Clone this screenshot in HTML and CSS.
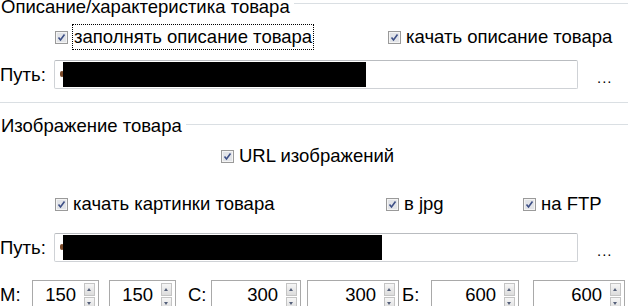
FILE: index.html
```html
<!DOCTYPE html>
<html lang="ru">
<head>
    <meta charset="UTF-8">
    <title>Настройки товара</title>
    <link rel="stylesheet" href="styles.css">
</head>
<body>
    <section class="group first">
        <div class="legend"><span class="legend-text">Описание/характеристика товара</span></div>
        <div class="row opts1">
            <label class="check w-fill">
                <svg class="box" width="13" height="13" viewBox="0 0 13 13"><rect x="0.5" y="0.5" width="12" height="12" fill="#f4f4f4" stroke="#9a9a9a"/><rect x="2" y="2" width="9" height="9" fill="#e2e4e8"/><path d="M3.5 6.5 L5.5 9 L9.5 3.5" fill="none" stroke="#3d4f86" stroke-width="1.6"/></svg>
                <span class="focus">заполнять описание товара</span>
            </label>
            <label class="check">
                <svg class="box" width="13" height="13" viewBox="0 0 13 13"><rect x="0.5" y="0.5" width="12" height="12" fill="#f4f4f4" stroke="#9a9a9a"/><rect x="2" y="2" width="9" height="9" fill="#e2e4e8"/><path d="M3.5 6.5 L5.5 9 L9.5 3.5" fill="none" stroke="#3d4f86" stroke-width="1.6"/></svg>
                <span>качать описание товара</span>
            </label>
        </div>
        <div class="row path">
            <span class="path-label">Путь:</span>
            <div class="field"><i class="dot"></i><i class="redact r1"></i></div>
            <span class="dots">...</span>
        </div>
    </section>

    <section class="group second">
        <div class="legend"><span class="legend-text">Изображение товара</span></div>
        <div class="row url">
            <label class="check">
                <svg class="box" width="13" height="13" viewBox="0 0 13 13"><rect x="0.5" y="0.5" width="12" height="12" fill="#f4f4f4" stroke="#9a9a9a"/><rect x="2" y="2" width="9" height="9" fill="#e2e4e8"/><path d="M3.5 6.5 L5.5 9 L9.5 3.5" fill="none" stroke="#3d4f86" stroke-width="1.6"/></svg>
                <span>URL изображений</span>
            </label>
        </div>
        <div class="row opts2">
            <label class="check w-pics">
                <svg class="box" width="13" height="13" viewBox="0 0 13 13"><rect x="0.5" y="0.5" width="12" height="12" fill="#f4f4f4" stroke="#9a9a9a"/><rect x="2" y="2" width="9" height="9" fill="#e2e4e8"/><path d="M3.5 6.5 L5.5 9 L9.5 3.5" fill="none" stroke="#3d4f86" stroke-width="1.6"/></svg>
                <span>качать картинки товара</span>
            </label>
            <label class="check w-jpg">
                <svg class="box" width="13" height="13" viewBox="0 0 13 13"><rect x="0.5" y="0.5" width="12" height="12" fill="#f4f4f4" stroke="#9a9a9a"/><rect x="2" y="2" width="9" height="9" fill="#e2e4e8"/><path d="M3.5 6.5 L5.5 9 L9.5 3.5" fill="none" stroke="#3d4f86" stroke-width="1.6"/></svg>
                <span>в jpg</span>
            </label>
            <label class="check">
                <svg class="box" width="13" height="13" viewBox="0 0 13 13"><rect x="0.5" y="0.5" width="12" height="12" fill="#f4f4f4" stroke="#9a9a9a"/><rect x="2" y="2" width="9" height="9" fill="#e2e4e8"/><path d="M3.5 6.5 L5.5 9 L9.5 3.5" fill="none" stroke="#3d4f86" stroke-width="1.6"/></svg>
                <span>на FTP</span>
            </label>
        </div>
        <div class="row path path2">
            <span class="path-label">Путь:</span>
            <div class="field"><i class="dot"></i><i class="redact r2"></i><i class="under"></i></div>
            <span class="dots">...</span>
        </div>
        <div class="row sizes">
            <span class="size-label">М:</span>
            <div class="spin w67"><span class="num">150</span><span class="btns"><b class="up"></b><b class="down"></b></span></div>
            <div class="spin w67 s2"><span class="num">150</span><span class="btns"><b class="up"></b><b class="down"></b></span></div>
            <span class="size-label c">С:</span>
            <div class="spin w90"><span class="num">300</span><span class="btns"><b class="up"></b><b class="down"></b></span></div>
            <div class="spin w92 s4"><span class="num">300</span><span class="btns"><b class="up"></b><b class="down"></b></span></div>
            <span class="size-label b">Б:</span>
            <div class="spin w88"><span class="num">600</span><span class="btns"><b class="up"></b><b class="down"></b></span></div>
            <div class="spin w92 s6"><span class="num">600</span><span class="btns"><b class="up"></b><b class="down"></b></span></div>
        </div>
    </section>
</body>
</html>
```

FILE: styles.css
```css
body{
    margin: 0;
    width: 628px;
    height: 306px;
    overflow: hidden;
    background: #fff;
    color: #000;
    font-family: "Liberation Sans", Arial, sans-serif;
    font-size: 18.5px;
}
.group{
    position: relative;
}
.first{
    margin-top: -3px;
    height: 105px;
    border-bottom: 1px solid #dadfe3;
}
.second{
    margin-top: 13px;
}
.legend{
    display: flex;
    height: 20px;
    line-height: 20px;
}
.legend::after{
    content: "";
    flex: 1;
    height: 0;
    margin-top: 6px;
    margin-left: 4px;
    border-top: 1px solid #dadfe3;
}
.second .legend::after{
    margin-top: 8px;
}
.legend-text{
    padding-left: 1px;
}
.row{
    display: flex;
    align-items: center;
}
.check{
    display: flex;
    align-items: center;
    line-height: 20px;
    flex: none;
}
.box{
    flex: none;
    margin-right: 5px;
}
.opts1{
    height: 24px;
    margin-top: 8px;
    padding-left: 55px;
}
.w-fill{
    width: 333px;
}
.w-pics{
    width: 331px;
}
.w-jpg{
    width: 137px;
}
.focus{
    display: inline-block;
    padding: 1px 1px;
    outline: 1px dotted #000;
    line-height: 22px;
}
.path{
    height: 29px;
    margin-top: 11px;
}
.path-label{
    width: 54px;
}
.field{
    position: relative;
    box-sizing: border-box;
    width: 524px;
    height: 29px;
    border: 1px solid #cfd2d6;
    border-top-color: #b9bcc0;
    border-radius: 2px;
}
.dot{
    position: absolute;
    left: 5px;
    top: 10px;
    width: 4px;
    height: 6px;
    background: #7a4a2a;
    border-radius: 2px;
}
.redact{
    position: absolute;
    left: 8px;
    top: 1px;
    height: 25px;
    background: #000;
}
.r1{ width: 303px; }
.r2{ width: 319px; }
.under{
    position: absolute;
    left: 222px;
    top: 24px;
    width: 10px;
    height: 2px;
    background: #000;
}
.dots{
    margin-left: 19px;
    margin-top: 6px;
    font-size: 15px;
    letter-spacing: 1px;
}
.url{
    height: 20px;
    margin-top: 10px;
    padding-left: 221px;
}
.opts2{
    height: 20px;
    margin-top: 28px;
    padding-left: 55px;
}
.path2{
    margin-top: 19px;
}
.sizes{
    height: 30px;
    margin-top: 18px;
}
.size-label{
    width: 32px;
    flex: none;
}
.size-label.c{
    width: 23px;
    margin-left: 12px;
}
.size-label.b{
    width: 29px;
    margin-left: 3px;
}
.spin{
    display: flex;
    align-items: flex-start;
    justify-content: flex-end;
    box-sizing: border-box;
    height: 30px;
    padding: 1px 3px 0 0;
    border: 1px solid #a9a9a9;
    flex: none;
}
.num{
    line-height: 26px;
    margin-right: 8px;
}
.btns{
    display: flex;
    flex-direction: column;
    gap: 1px;
    margin-top: 1px;
}
.btns b{
    position: relative;
    display: block;
    width: 9px;
    height: 11px;
    border: 1px solid #c4c4c4;
    background: linear-gradient(#f6f6f6, #dcdcdc);
}
.btns b::after{
    content: "";
    position: absolute;
    left: 2px;
    border-left: 2.5px solid transparent;
    border-right: 2.5px solid transparent;
}
.up::after{
    top: 4px;
    border-bottom: 3px solid #55607a;
}
.down::after{
    top: 4px;
    border-top: 3px solid #55607a;
}
.w67{ width: 67px; }
.w88{ width: 88px; }
.w90{ width: 90px; }
.w92{ width: 92px; }
.s2{ margin-left: 10px; }
.s4{ margin-left: 6px; }
.s6{ margin-left: 14px; }
```
